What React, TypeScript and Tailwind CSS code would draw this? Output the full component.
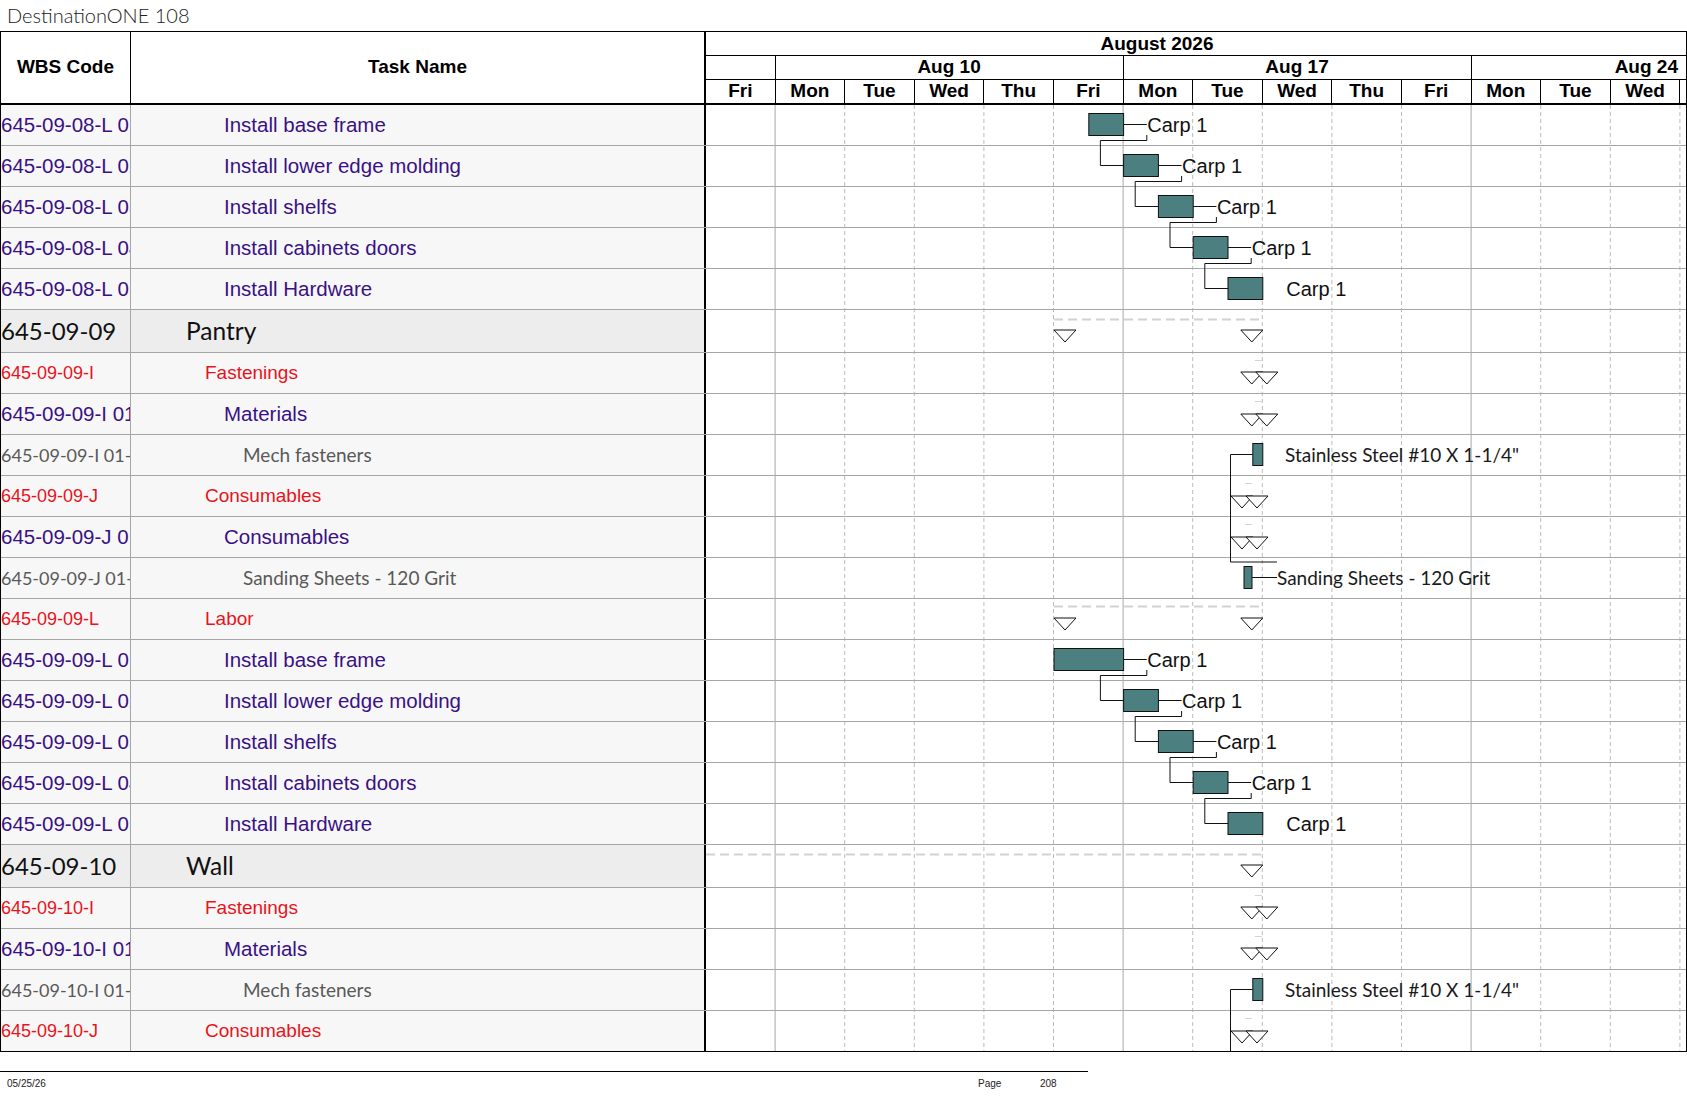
import React from "react";

type Kind = "summary" | "red" | "purple" | "grey";

interface Row {
  code: string;
  name: string;
  kind: Kind;
}

const rows: Row[] = [
  { code: "645-09-08-L 01", name: "Install base frame", kind: "purple" },
  { code: "645-09-08-L 02", name: "Install lower edge molding", kind: "purple" },
  { code: "645-09-08-L 03", name: "Install shelfs", kind: "purple" },
  { code: "645-09-08-L 04", name: "Install cabinets doors", kind: "purple" },
  { code: "645-09-08-L 05", name: "Install Hardware", kind: "purple" },
  { code: "645-09-09", name: "Pantry", kind: "summary" },
  { code: "645-09-09-I", name: "Fastenings", kind: "red" },
  { code: "645-09-09-I 01", name: "Materials", kind: "purple" },
  { code: "645-09-09-I 01-01", name: "Mech fasteners", kind: "grey" },
  { code: "645-09-09-J", name: "Consumables", kind: "red" },
  { code: "645-09-09-J 01", name: "Consumables", kind: "purple" },
  { code: "645-09-09-J 01-01", name: "Sanding Sheets - 120 Grit", kind: "grey" },
  { code: "645-09-09-L", name: "Labor", kind: "red" },
  { code: "645-09-09-L 01", name: "Install base frame", kind: "purple" },
  { code: "645-09-09-L 02", name: "Install lower edge molding", kind: "purple" },
  { code: "645-09-09-L 03", name: "Install shelfs", kind: "purple" },
  { code: "645-09-09-L 04", name: "Install cabinets doors", kind: "purple" },
  { code: "645-09-09-L 05", name: "Install Hardware", kind: "purple" },
  { code: "645-09-10", name: "Wall", kind: "summary" },
  { code: "645-09-10-I", name: "Fastenings", kind: "red" },
  { code: "645-09-10-I 01", name: "Materials", kind: "purple" },
  { code: "645-09-10-I 01-01", name: "Mech fasteners", kind: "grey" },
  { code: "645-09-10-J", name: "Consumables", kind: "red" },
];

const days = ["Fri", "Mon", "Tue", "Wed", "Thu", "Fri", "Mon", "Tue", "Wed", "Thu", "Fri", "Mon", "Tue", "Wed"];

const DAY = 69.6;
const W = 980;

const heights = rows.map((r, i) => (r.kind === "summary" ? 43 : i === rows.length - 1 ? 40 : 41));
const tops: number[] = [];
heights.reduce((acc, h) => {
  tops.push(acc);
  return acc + h;
}, 0);
const TOTAL = heights.reduce((a, b) => a + b, 0);

const d = (n: number) => n * DAY;

const ARIAL = "font-['Liberation_Sans',Arial,sans-serif]";
const LATO = "font-['Lato','Carlito',sans-serif]";

const codeClass: Record<Kind, string> = {
  summary: `${LATO} text-[24px] text-[#111111]`,
  red: `${ARIAL} text-[18px] text-[#e8131b]`,
  purple: `${ARIAL} text-[20.5px] text-[#3a1185]`,
  grey: `${LATO} text-[18px] text-[#595959]`,
};

const nameClass: Record<Kind, string> = {
  summary: `${LATO} text-[24.5px] text-[#111111] pl-[55px]`,
  red: `${ARIAL} text-[19px] text-[#e8131b] pl-[74px]`,
  purple: `${ARIAL} text-[20.5px] text-[#3a1185] pl-[93px]`,
  grey: `${LATO} text-[19px] text-[#595959] pl-[112px]`,
};

const BAR_FILL = "#4b7f80";
const LINE = "#111111";

function Bar({ x1, x2, top }: { x1: number; x2: number; top: number }) {
  return <rect x={x1} y={top + 8.5} width={x2 - x1} height={22} fill={BAR_FILL} stroke={LINE} strokeWidth={1} />;
}

function Tri({ x, y }: { x: number; y: number }) {
  return <polygon points={`${x},${y} ${x + 22},${y} ${x + 11},${y + 12}`} fill="#ffffff" stroke={LINE} strokeWidth={1} />;
}

function Pair({ x, top, dy }: { x: number; top: number; dy: number }) {
  return (
    <g>
      <line x1={x + 14} x2={x + 21} y1={top + 7.5} y2={top + 7.5} stroke="#d4d4d4" strokeWidth={1} />
      <Tri x={x} y={top + dy} />
      <Tri x={x + 15} y={top + dy} />
    </g>
  );
}

function SummaryLine({ x1, x2, y }: { x1: number; x2: number; y: number }) {
  return <line x1={x1} x2={x2} y1={y} y2={y} stroke="#d2d2d2" strokeWidth={2} strokeDasharray="9 5" />;
}

function Chain({ first, starts }: { first: number; starts: number[] }) {
  return (
    <g>
      {starts.map((s, i) => {
        const top = tops[first + i];
        const x1 = d(s);
        const x2 = d(s + 0.5) + (i === 0 && s === 5 ? DAY / 2 : 0);
        const last = i === starts.length - 1;
        const tx = x2 + 23.2;
        return (
          <g key={i}>
            <Bar x1={x1} x2={x2} top={top} />
            {!last && (
              <>
                <line x1={x2} x2={tx} y1={top + 19.5} y2={top + 19.5} stroke={LINE} strokeWidth={1} />
                <path
                  d={`M ${tx} ${top + 30} V ${top + 35.5} H ${x2 - 23.2} V ${tops[first + i + 1] + 19.5} H ${d(starts[i + 1])}`}
                  fill="none"
                  stroke={LINE}
                  strokeWidth={1}
                />
              </>
            )}
            <text
              x={last ? x2 + 23.5 : tx + 0.5}
              y={top + 27}
              fontFamily="'Liberation Sans', Arial, sans-serif"
              fontSize={20}
              fill="#111111"
            >
              Carp 1
            </text>
          </g>
        );
      })}
    </g>
  );
}

function Label({ x, top, children }: { x: number; top: number; children: React.ReactNode }) {
  return (
    <text x={x} y={top + 27} fontFamily="Lato, Carlito, sans-serif" fontSize={19} fill="#1a1a1a">
      {children}
    </text>
  );
}

function GanttChart() {
  const endX = d(8);
  return (
    <svg width={W} height={TOTAL} className="block">
      {/* day grid */}
      {Array.from({ length: 14 }, (_, k) => k + 1).map((i) => {
        const x = d(i) - 0.5;
        const week = i === 1 || i === 6 || i === 11;
        return (
          <line
            key={`v${i}`}
            x1={x}
            x2={x}
            y1={0}
            y2={TOTAL}
            stroke={week ? "#a8a8a8" : "#bcbcbc"}
            strokeWidth={1}
            strokeDasharray={week ? undefined : "4 3"}
          />
        );
      })}
      {rows.slice(0, -1).map((_, i) => (
        <line key={`h${i}`} x1={0} x2={W} y1={tops[i] + heights[i] - 0.5} y2={tops[i] + heights[i] - 0.5} stroke="#a6a6a6" strokeWidth={1} />
      ))}

      {/* 645-09-08-L labor */}
      <Chain first={0} starts={[5.5, 6, 6.5, 7, 7.5]} />

      {/* Pantry */}
      <SummaryLine x1={d(5)} x2={endX} y={tops[5] + 9.5} />
      <Tri x={d(5)} y={tops[5] + 20} />
      <Tri x={endX - 22} y={tops[5] + 20} />

      <Pair x={endX - 22} top={tops[6]} dy={19} />
      <Pair x={endX - 22} top={tops[7]} dy={20} />

      <Bar x1={endX - 10} x2={endX} top={tops[8]} />
      <path d={`M ${endX - 10} ${tops[8] + 19.5} H 524.5 V ${tops[11] + 4} H 571`} fill="none" stroke={LINE} strokeWidth={1} />
      <Label x={579} top={tops[8]}>Stainless Steel #10 X 1-1/4"</Label>

      <Pair x={525} top={tops[9]} dy={20} />
      <Pair x={525} top={tops[10]} dy={20} />

      <Bar x1={538} x2={546} top={tops[11]} />
      <line x1={546} x2={571} y1={tops[11] + 19.5} y2={tops[11] + 19.5} stroke={LINE} strokeWidth={1} />
      <Label x={571} top={tops[11]}>Sanding Sheets - 120 Grit</Label>

      {/* Labor */}
      <SummaryLine x1={d(5)} x2={endX} y={tops[12] + 7.5} />
      <Tri x={d(5)} y={tops[12] + 19} />
      <Tri x={endX - 22} y={tops[12] + 19} />

      <Chain first={13} starts={[5, 6, 6.5, 7, 7.5]} />

      {/* Wall */}
      <SummaryLine x1={0} x2={endX} y={tops[18] + 9.5} />
      <Tri x={endX - 22} y={tops[18] + 20} />

      <Pair x={endX - 22} top={tops[19]} dy={19} />
      <Pair x={endX - 22} top={tops[20]} dy={19} />

      <Bar x1={endX - 10} x2={endX} top={tops[21]} />
      <path d={`M ${endX - 10} ${tops[21] + 19.5} H 524.5 V ${TOTAL}`} fill="none" stroke={LINE} strokeWidth={1} />
      <Label x={579} top={tops[21]}>Stainless Steel #10 X 1-1/4"</Label>

      <Pair x={525} top={tops[22]} dy={20} />
    </svg>
  );
}

export default function App() {
  return (
    <div className="w-[1687px] h-[1097px] bg-white overflow-hidden text-black">
      {/* page title */}
      <div className={`h-[31px] pl-[7px] pb-[2px] flex items-center text-[20px] font-light text-[#222222] ${LATO}`}>DestinationONE 108</div>

      <div className="border border-black">
        {/* header */}
        <div className={`flex border-b-2 border-black font-bold text-[19px] ${ARIAL}`}>
          <div className="w-[130px] h-[71px] border-r border-black flex items-center justify-center">WBS Code</div>
          <div className="w-[575px] h-[71px] border-r-2 border-black flex items-center justify-center">Task Name</div>
          <div className="flex-1 flex flex-col leading-none">
            <div className="h-[24px] border-b border-black flex items-center justify-center pr-[78px]">August 2026</div>
            <div className="h-[24px] border-b border-black grid grid-cols-[repeat(14,69.6px)_1fr]">
              <div className="border-r border-black" />
              <div className="col-span-5 border-r border-black flex items-center justify-center pb-[2px]">Aug 10</div>
              <div className="col-span-5 border-r border-black flex items-center justify-center pb-[2px]">Aug 17</div>
              <div className="col-span-4 flex items-center justify-end pr-[8px] pb-[2px]">Aug 24</div>
            </div>
            <div className="h-[23px] grid grid-cols-[repeat(14,69.6px)_1fr]">
              {days.map((day, i) => (
                <div key={i} className="border-r border-black flex items-center justify-center pb-[2px]">
                  {day}
                </div>
              ))}
              <div />
            </div>
          </div>
        </div>

        {/* body */}
        <div className="flex">
          <div className="w-[705px] flex flex-col">
            {rows.map((r, i) => {
              const last = i === rows.length - 1;
              const bg = r.kind === "summary" ? "bg-[#ededed]" : "bg-[#f7f7f7]";
              return (
                <div
                  key={i}
                  className={`flex ${r.kind === "summary" ? "h-[43px]" : last ? "h-[40px]" : "h-[41px]"} ${last ? "" : "border-b border-[#a6a6a6]"}`}
                >
                  <div className={`w-[130px] border-r border-[#a6a6a6] flex items-center overflow-hidden whitespace-nowrap ${bg} ${codeClass[r.kind]}`}>
                    {r.code}
                  </div>
                  <div className={`w-[575px] border-r-2 border-black flex items-center overflow-hidden whitespace-nowrap ${bg} ${nameClass[r.kind]}`}>
                    {r.name}
                  </div>
                </div>
              );
            })}
          </div>
          <div className="flex-1 overflow-hidden">
            <GanttChart />
          </div>
        </div>
      </div>

      {/* footer */}
      <div className={`mt-[19px] w-[1088px] border-t border-black pt-[6px] flex text-[10px] leading-[12px] text-[#222222] ${ARIAL}`}>
        <div className="flex-1 pl-[7px]">05/25/26</div>
        <div className="w-[62px]">Page</div>
        <div className="w-[48px]">208</div>
      </div>
    </div>
  );
}
